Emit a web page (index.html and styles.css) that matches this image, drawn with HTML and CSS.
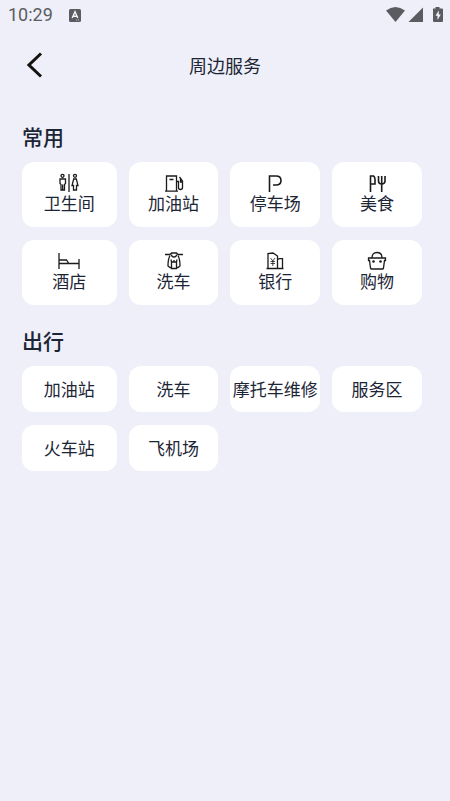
FILE: index.html
```html
<!DOCTYPE html>
<html lang="zh-CN">
<head>
<meta charset="utf-8">
<meta name="viewport" content="width=device-width, initial-scale=1">
<title>周边服务</title>
<link rel="stylesheet" href="styles.css">
</head>
<body>
<div class="status">
  <span class="clock">10:29</span>
  <svg class="badge" width="12" height="13" viewBox="0 0 12 13" aria-hidden="true"><rect width="12" height="13" rx="1.5" fill="#5b5c61"/><path d="M3.2 9 6 2.8 8.8 9M4.2 7.2h3.6" fill="none" stroke="#f4f4fa" stroke-width="1.4"/><path d="M7 11h3" stroke="#c8c8ce" stroke-width="1" stroke-dasharray="1 1"/></svg>
  <svg class="signals" width="58" height="18" viewBox="0 0 58 18" aria-hidden="true">
    <g fill="#5b5c61">
      <path d="M0 4.6Q9.5-2.6 19 4.6L9.5 16Z"/>
      <path d="M37 1.5V16H22.500Z"/>
      <path d="M47 2.500h2.500V1h4v1.500H56q1 0 1 1V15q0 1-1 1h-8q-1 0-1-1Z"/>
    </g>
    <path d="M52.800 4.500 49.500 9.800h2V14l3.300-5.600h-2Z" fill="#f4f4fa"/>
  </svg>
</div>
<header class="bar">
  <button class="back" type="button" aria-label="返回"><svg width="16" height="26" viewBox="0 0 16 26" aria-hidden="true"><path d="M14 1.500 2 13 14 24.500" fill="none" stroke="#15110f" stroke-width="3"/></svg></button>
  <h1>周边服务</h1>
</header>
<main>
  <section>
    <h2>常用</h2>
    <div class="grid">
      <button class="card tall" type="button"><svg class="icon" viewBox="0 0 22 20" aria-hidden="true"><circle cx="4.500" cy="2.800" r="1.500"/><path d="M2 6h5.500v4.500l-1 1V17h-3.500v-5.500L2 10.500ZM4.700 11.500V17M11 1v18"/><circle cx="17" cy="2.800" r="1.500"/><path d="M15.700 6h2.600l1.700 6.500h-1.500V17h-3v-4.500H14Z"/></svg>卫生间</button>
      <button class="card tall" type="button"><svg class="icon" viewBox="0 0 22 20" aria-hidden="true"><path d="M3.500 18V3h10v15M2 18.200h13M6.500 6.500h4M13.500 8.500h2v6q0 2 2 2t2-2V8l-3-4M19.500 9h-2V6"/></svg>加油站</button>
      <button class="card tall" type="button"><svg class="icon" viewBox="0 0 22 20" aria-hidden="true"><path class="bold" d="M5.500 19V3H12q5 0 5 4.500T12 12H9"/></svg>停车场</button>
      <button class="card tall" type="button"><svg class="icon" viewBox="0 0 22 20" aria-hidden="true"><path class="bold" d="M4.500 19V3H7.500q1.500 1 1.500 3.500V11H4.500M12.500 3v5q0 3 3.200 3T19 8V3M15.700 3v16"/></svg>美食</button>
      <button class="card tall" type="button"><svg class="icon" viewBox="0 0 22 20" aria-hidden="true"><path d="M1 2v16M21 8v10M1 12.500h20M1 9h7.500l2 3"/></svg>酒店</button>
      <button class="card tall" type="button"><svg class="icon" viewBox="0 0 22 20" aria-hidden="true"><path d="M2 3.500h5L8.500 2h5L15 3.500h5"/><path d="M8.500 3.500q0 2.500 2.500 2.500t2.500-2.500M7 4.500Q5 8 5 15l2 1.500h1.500M15 4.500q2 3.500 2 10.500l-2 1.500h-1.500M8.500 11v6.500h5V11M8 8.500l.5 2.500h5l.5-2.500M11 9v2"/></svg>洗车</button>
      <button class="card tall" type="button"><svg class="icon" viewBox="0 0 22 20" aria-hidden="true"><path d="M2.500 17.500h17M4 17V2.500L9 2l4.500 3v12M13.500 8.500l2-.8h3V17"/><path class="fine" d="m6.500 7 2.300 3 2.200-3M8.800 10v5M6.500 10.500h4.500M6.500 12.500h4.500"/></svg>银行</button>
      <button class="card tall" type="button"><svg class="icon" viewBox="0 0 22 20" aria-hidden="true"><path d="M2.500 7h17v2.500h-1l-1 7.500q-.2 1-1.200 1H5.700q-1 0-1.200-1l-1-7.500h-1ZM6 7q0-5.500 5-5.500T16 7"/><circle class="dot" cx="7.500" cy="10.500" r="1.300"/><circle class="dot" cx="14.500" cy="10.500" r="1.300"/></svg>购物</button>
    </div>
  </section>
  <section>
    <h2>出行</h2>
    <div class="grid">
      <button class="card" type="button">加油站</button>
      <button class="card" type="button">洗车</button>
      <button class="card" type="button">摩托车维修</button>
      <button class="card" type="button">服务区</button>
      <button class="card" type="button">火车站</button>
      <button class="card" type="button">飞机场</button>
    </div>
  </section>
</main>
</body>
</html>
```
FILE: styles.css
```css
* { box-sizing: border-box; }
body {
  margin: 0;
  min-height: 100vh;
  background: #eeeff8;
  color: #1c2536;
  font-family: "Noto Sans CJK SC", sans-serif;
}
button {
  border: 0;
  padding: 0;
  color: inherit;
  font: inherit;
}
svg { display: block; }
.status {
  display: flex;
  align-items: center;
  height: 30px;
  padding: 0 6px 0 8px;
  color: #5b5c61;
}
.clock {
  font: 400 18px/32px Roboto, sans-serif;
}
.badge { margin-left: 16px; }
.signals { margin-left: auto; }
.bar {
  display: grid;
  grid-template-columns: 42px 1fr 42px;
  align-items: center;
  height: 70px;
  padding: 0 14px;
}
.back {
  display: flex;
  justify-content: center;
  padding: 10px 0;
  background: none;
}
h1 {
  margin: 0;
  font-size: 18px;
  font-weight: 400;
  line-height: 26px;
  text-align: center;
}
main { padding: 20px 28px 20px 22px; }
section { margin-bottom: 19px; }
h2 {
  margin: 0 0 10px;
  font-size: 21px;
  font-weight: 500;
  line-height: 32px;
}
.grid {
  display: grid;
  grid-template-columns: 95fr 90fr 90fr 90fr;
  gap: 13px 12px;
}
.card {
  display: flex;
  flex-direction: column;
  align-items: center;
  justify-content: center;
  min-width: 0;
  height: 46px;
  border-radius: 12px;
  background: #fff;
  font-size: 17px;
  line-height: 20px;
  white-space: nowrap;
}
.tall {
  height: 65px;
  padding-bottom: 4px;
}
.icon {
  width: 22px;
  height: 20px;
  fill: none;
  stroke: #1b1b1d;
  stroke-width: 1.3;
}
.bold { stroke-width: 1.6; }
.fine { stroke-width: 0.8; }
.dot { fill: #1b1b1d; stroke: none; }
```
